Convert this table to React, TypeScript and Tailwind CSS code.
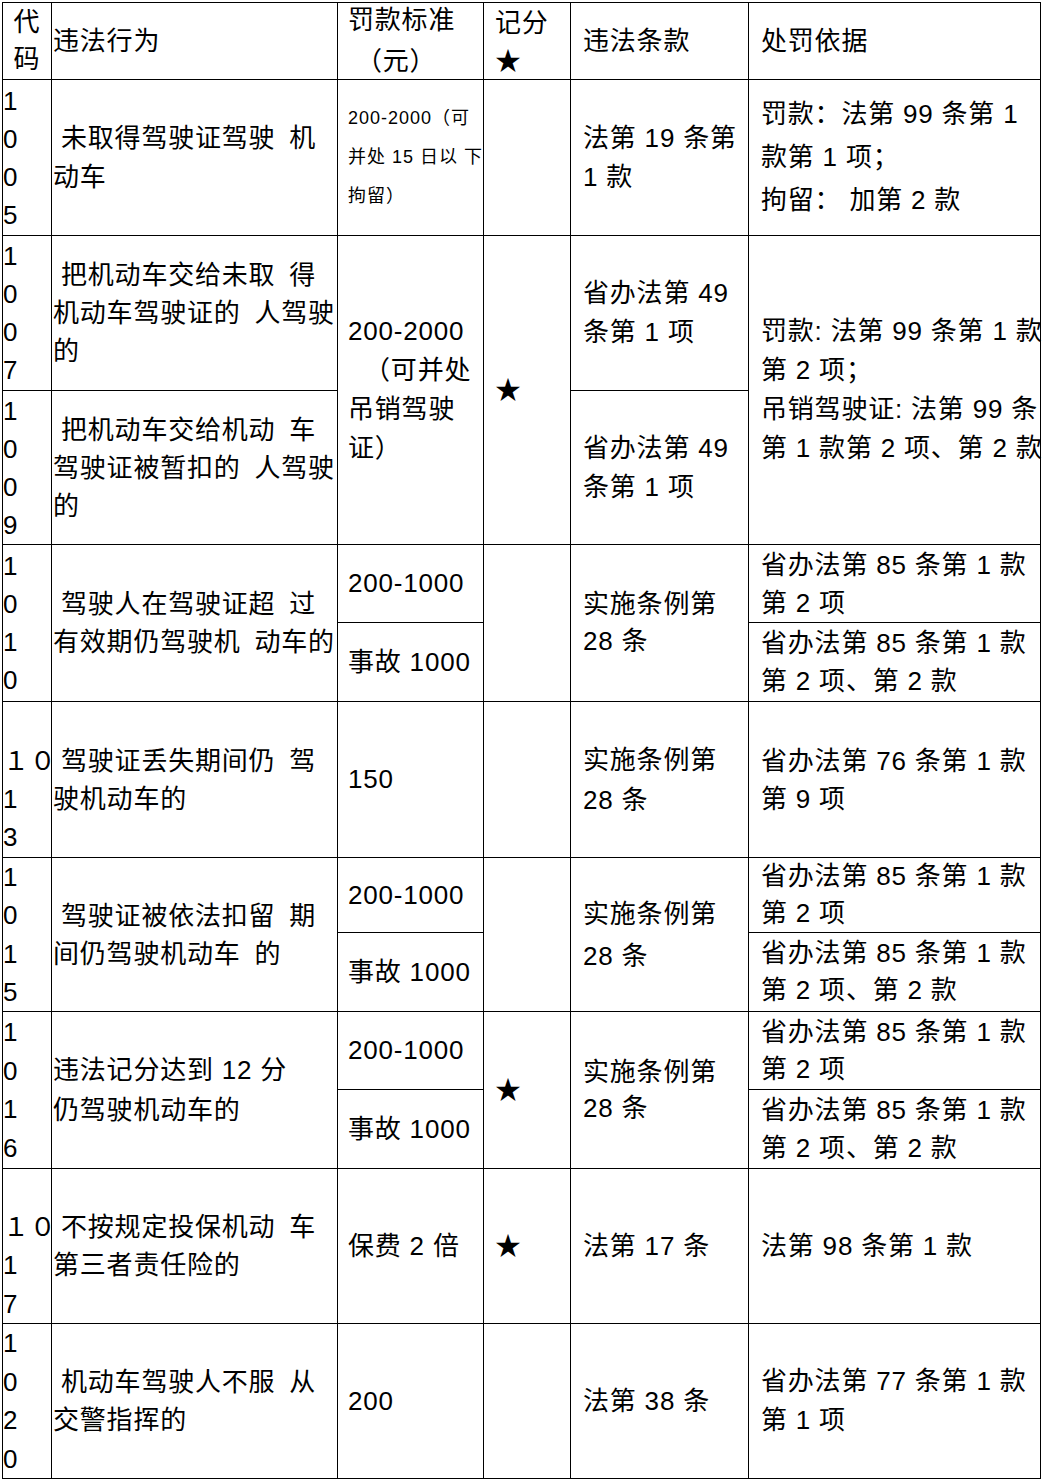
const cell = "bg-white flex flex-col justify-center";

function Lines({ lines, className = "" }: { lines: string[]; className?: string }) {
  return (
    <div className={className}>
      {lines.map((l, i) => (
        <div key={i} className="whitespace-pre">
          {l === "" ? "\u00a0" : l}
        </div>
      ))}
    </div>
  );
}

const Star = () => <div className="text-[26px] leading-none">★</div>;

export default function App() {
  return (
    <div className="min-h-screen bg-white pl-[2px] pt-[2px] text-black font-['Liberation_Sans','Noto_Sans_CJK_SC',sans-serif] text-[26px] tracking-[0.8px]">
      <div className="grid w-fit gap-px bg-black p-px grid-cols-[48px_285px_145px_86px_177px_291px] grid-rows-[76px_155px_154px_153px_77px_78px_155px_74px_78px_77px_78px_154px_154px]">
        {/* header */}
        <div className={`${cell} col-start-1 row-start-1 items-center`}>
          <Lines lines={["代", "码"]} className="leading-[37px] text-center" />
        </div>
        <div className={`${cell} col-start-2 row-start-1 pl-[1px]`}>
          <Lines lines={["违法行为"]} />
        </div>
        <div className={`${cell} col-start-3 row-start-1 pl-[10px]`}>
          <Lines lines={["罚款标准", " （元）"]} className="leading-[41px]" />
        </div>
        <div className={`${cell} col-start-4 row-start-1 pl-[11px]`}>
          <div className="leading-[40px]">记分</div>
          <div className="h-[40px] flex items-center">
            <Star />
          </div>
        </div>
        <div className={`${cell} col-start-5 row-start-1 pl-[12px]`}>
          <Lines lines={["违法条款"]} />
        </div>
        <div className={`${cell} col-start-6 row-start-1 pl-[12px]`}>
          <Lines lines={["处罚依据"]} />
        </div>

        {/* 1005 */}
        <div className={`${cell} col-start-1 row-start-2`}>
          <Lines lines={["1", "0", "0", "5"]} className="leading-[38px]" />
        </div>
        <div className={`${cell} col-start-2 row-start-2 pl-[1px]`}>
          <Lines lines={[" 未取得驾驶证驾驶\u2002机", "动车"]} className="leading-[39px]" />
        </div>
        <div className={`${cell} col-start-3 row-start-2 pl-[10px]`}>
          <Lines
            lines={["200-2000（可", "并处 15 日以 下", "拘留）"]}
            className="text-[18px] leading-[39px] tracking-[1px]"
          />
        </div>
        <div className={`${cell} col-start-4 row-start-2`} />
        <div className={`${cell} col-start-5 row-start-2 pl-[12px]`}>
          <Lines lines={["法第 19 条第", "1 款"]} className="leading-[39px]" />
        </div>
        <div className={`${cell} col-start-6 row-start-2 pl-[12px]`}>
          <Lines lines={["罚款：法第 99 条第 1", "款第 1 项；", "拘留： 加第 2 款"]} className="leading-[43px]" />
        </div>

        {/* 1007 / 1009 */}
        <div className={`${cell} col-start-1 row-start-3`}>
          <Lines lines={["1", "0", "0", "7"]} className="leading-[38px]" />
        </div>
        <div className={`${cell} col-start-2 row-start-3 pl-[1px]`}>
          <Lines
            lines={[" 把机动车交给未取\u2002得", "机动车驾驶证的\u2002人驾驶", "的"]}
            className="leading-[38px]"
          />
        </div>
        <div className={`${cell} col-start-3 row-start-3 row-span-2 pl-[10px]`}>
          <Lines lines={["200-2000", "  （可并处", "吊销驾驶", "证）"]} className="leading-[39px]" />
        </div>
        <div className={`${cell} col-start-4 row-start-3 row-span-2 pl-[11px]`}>
          <Star />
        </div>
        <div className={`${cell} col-start-5 row-start-3 pl-[12px]`}>
          <Lines lines={["省办法第 49", "条第 1 项"]} className="leading-[39px]" />
        </div>
        <div className={`${cell} col-start-6 row-start-3 row-span-2 pl-[12px]`}>
          <Lines
            lines={["罚款: 法第 99 条第 1 款", "第 2 项；", "吊销驾驶证: 法第 99 条", "第 1 款第 2 项、第 2 款"]}
            className="leading-[39px]"
          />
        </div>
        <div className={`${cell} col-start-1 row-start-4`}>
          <Lines lines={["1", "0", "0", "9"]} className="leading-[38px]" />
        </div>
        <div className={`${cell} col-start-2 row-start-4 pl-[1px]`}>
          <Lines
            lines={[" 把机动车交给机动\u2002车", "驾驶证被暂扣的\u2002人驾驶", "的"]}
            className="leading-[38px]"
          />
        </div>
        <div className={`${cell} col-start-5 row-start-4 pl-[12px]`}>
          <Lines lines={["省办法第 49", "条第 1 项"]} className="leading-[39px]" />
        </div>

        {/* 1010 */}
        <div className={`${cell} col-start-1 row-start-5 row-span-2`}>
          <Lines lines={["1", "0", "1", "0"]} className="leading-[38px]" />
        </div>
        <div className={`${cell} col-start-2 row-start-5 row-span-2 pl-[1px]`}>
          <Lines lines={[" 驾驶人在驾驶证超\u2002过", "有效期仍驾驶机\u2002动车的"]} className="leading-[38px]" />
        </div>
        <div className={`${cell} col-start-3 row-start-5 pl-[10px]`}>
          <Lines lines={["200-1000"]} />
        </div>
        <div className={`${cell} col-start-3 row-start-6 pl-[10px]`}>
          <Lines lines={["事故 1000"]} />
        </div>
        <div className={`${cell} col-start-4 row-start-5 row-span-2`} />
        <div className={`${cell} col-start-5 row-start-5 row-span-2 pl-[12px]`}>
          <Lines lines={["实施条例第", "28 条"]} className="leading-[37px]" />
        </div>
        <div className={`${cell} col-start-6 row-start-5 pl-[12px]`}>
          <Lines lines={["省办法第 85 条第 1 款", "第 2 项"]} className="leading-[38px]" />
        </div>
        <div className={`${cell} col-start-6 row-start-6 pl-[12px]`}>
          <Lines lines={["省办法第 85 条第 1 款", "第 2 项、第 2 款"]} className="leading-[38px]" />
        </div>

        {/* 1013 */}
        <div className={`${cell} col-start-1 row-start-7`}>
          <Lines lines={["", "１０", "1", "3"]} className="leading-[38px]" />
        </div>
        <div className={`${cell} col-start-2 row-start-7 pl-[1px]`}>
          <Lines lines={[" 驾驶证丢失期间仍\u2002驾", "驶机动车的"]} className="leading-[38px]" />
        </div>
        <div className={`${cell} col-start-3 row-start-7 pl-[10px]`}>
          <Lines lines={["150"]} />
        </div>
        <div className={`${cell} col-start-4 row-start-7`} />
        <div className={`${cell} col-start-5 row-start-7 pl-[12px]`}>
          <Lines lines={["实施条例第", "28 条"]} className="leading-[40px]" />
        </div>
        <div className={`${cell} col-start-6 row-start-7 pl-[12px]`}>
          <Lines lines={["省办法第 76 条第 1 款", "第 9 项"]} className="leading-[38px]" />
        </div>

        {/* 1015 */}
        <div className={`${cell} col-start-1 row-start-8 row-span-2`}>
          <Lines lines={["1", "0", "1", "5"]} className="leading-[38.5px]" />
        </div>
        <div className={`${cell} col-start-2 row-start-8 row-span-2 pl-[1px]`}>
          <Lines lines={[" 驾驶证被依法扣留\u2002期", "间仍驾驶机动车\u2002的"]} className="leading-[38px]" />
        </div>
        <div className={`${cell} col-start-3 row-start-8 pl-[10px]`}>
          <Lines lines={["200-1000"]} />
        </div>
        <div className={`${cell} col-start-3 row-start-9 pl-[10px]`}>
          <Lines lines={["事故 1000"]} />
        </div>
        <div className={`${cell} col-start-4 row-start-8 row-span-2`} />
        <div className={`${cell} col-start-5 row-start-8 row-span-2 pl-[12px]`}>
          <Lines lines={["实施条例第", "28 条"]} className="leading-[42px]" />
        </div>
        <div className={`${cell} col-start-6 row-start-8 pl-[12px]`}>
          <Lines lines={["省办法第 85 条第 1 款", "第 2 项"]} className="leading-[37px]" />
        </div>
        <div className={`${cell} col-start-6 row-start-9 pl-[12px]`}>
          <Lines lines={["省办法第 85 条第 1 款", "第 2 项、第 2 款"]} className="leading-[37px]" />
        </div>

        {/* 1016 */}
        <div className={`${cell} col-start-1 row-start-10 row-span-2`}>
          <Lines lines={["1", "0", "1", "6"]} className="leading-[38.5px]" />
        </div>
        <div className={`${cell} col-start-2 row-start-10 row-span-2 pl-[1px]`}>
          <Lines lines={["违法记分达到 12 分", "仍驾驶机动车的"]} className="leading-[40px]" />
        </div>
        <div className={`${cell} col-start-3 row-start-10 pl-[10px]`}>
          <Lines lines={["200-1000"]} />
        </div>
        <div className={`${cell} col-start-3 row-start-11 pl-[10px]`}>
          <Lines lines={["事故 1000"]} />
        </div>
        <div className={`${cell} col-start-4 row-start-10 row-span-2 pl-[11px]`}>
          <Star />
        </div>
        <div className={`${cell} col-start-5 row-start-10 row-span-2 pl-[12px]`}>
          <Lines lines={["实施条例第", "28 条"]} className="leading-[36px]" />
        </div>
        <div className={`${cell} col-start-6 row-start-10 pl-[12px]`}>
          <Lines lines={["省办法第 85 条第 1 款", "第 2 项"]} className="leading-[37px]" />
        </div>
        <div className={`${cell} col-start-6 row-start-11 pl-[12px]`}>
          <Lines lines={["省办法第 85 条第 1 款", "第 2 项、第 2 款"]} className="leading-[38px]" />
        </div>

        {/* 1017 */}
        <div className={`${cell} col-start-1 row-start-12`}>
          <Lines lines={["", "１０", "1", "7"]} className="leading-[38.5px]" />
        </div>
        <div className={`${cell} col-start-2 row-start-12 pl-[1px]`}>
          <Lines lines={[" 不按规定投保机动\u2002车", "第三者责任险的"]} className="leading-[38px]" />
        </div>
        <div className={`${cell} col-start-3 row-start-12 pl-[10px]`}>
          <Lines lines={["保费 2 倍"]} />
        </div>
        <div className={`${cell} col-start-4 row-start-12 pl-[11px]`}>
          <Star />
        </div>
        <div className={`${cell} col-start-5 row-start-12 pl-[12px]`}>
          <Lines lines={["法第 17 条"]} />
        </div>
        <div className={`${cell} col-start-6 row-start-12 pl-[12px]`}>
          <Lines lines={["法第 98 条第 1 款"]} />
        </div>

        {/* 1020 */}
        <div className={`${cell} col-start-1 row-start-13`}>
          <Lines lines={["1", "0", "2", "0"]} className="leading-[38.5px]" />
        </div>
        <div className={`${cell} col-start-2 row-start-13 pl-[1px]`}>
          <Lines lines={[" 机动车驾驶人不服\u2002从", "交警指挥的"]} className="leading-[38px]" />
        </div>
        <div className={`${cell} col-start-3 row-start-13 pl-[10px]`}>
          <Lines lines={["200"]} />
        </div>
        <div className={`${cell} col-start-4 row-start-13`} />
        <div className={`${cell} col-start-5 row-start-13 pl-[12px]`}>
          <Lines lines={["法第 38 条"]} />
        </div>
        <div className={`${cell} col-start-6 row-start-13 pl-[12px]`}>
          <Lines lines={["省办法第 77 条第 1 款", "第 1 项"]} className="leading-[39px]" />
        </div>
      </div>
    </div>
  );
}
